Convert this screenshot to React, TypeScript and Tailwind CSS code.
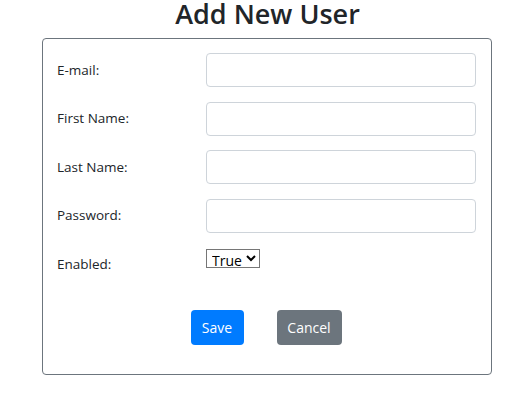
export default function App() {
  const fields = ["E-mail:", "First Name:", "Last Name:", "Password:"];

  return (
    <div className="w-[525px] h-[397px] bg-white text-[#212529] font-['Open_Sans','Noto_Sans',sans-serif]">
      <h3 className="text-center text-[27px] leading-[28px] font-semibold pl-[10px]">Add New User</h3>
      <div className="ml-[42px] mt-[10px] w-[450px] h-[337px] border border-[#6c757d] rounded-[4px] pt-[14px] pl-[14px] pr-[15px]">
        <div className="flex flex-col gap-[14.5px]">
          {fields.map((f) => (
            <div key={f} className="flex items-center h-[34px]">
              <label className="w-[149px] text-[13.5px]">{f}</label>
              <input
                type={f === "Password:" ? "password" : "text"}
                className="w-[270px] h-[34px] border border-[#ced4da] rounded-[4px] px-3"
              />
            </div>
          ))}
          <div className="flex items-start h-[34px]">
            <label className="w-[149px] text-[13.5px] leading-[34px]">Enabled:</label>
            <select className="mt-[2px] h-[19px] w-[54px] border border-[#767676] text-[14px] leading-[17px] text-black bg-white pl-[1px]">
              <option>True</option>
              <option>False</option>
            </select>
          </div>
        </div>
        <div className="flex justify-center gap-[33px] mt-[29px] pr-[1px]">
          <button className="h-[35px] w-[53px] rounded-[4px] bg-[#007bff] text-white text-[14px]">Save</button>
          <button className="h-[35px] w-[65px] rounded-[4px] bg-[#6c757d] text-white text-[14px]">Cancel</button>
        </div>
      </div>
    </div>
  );
}
